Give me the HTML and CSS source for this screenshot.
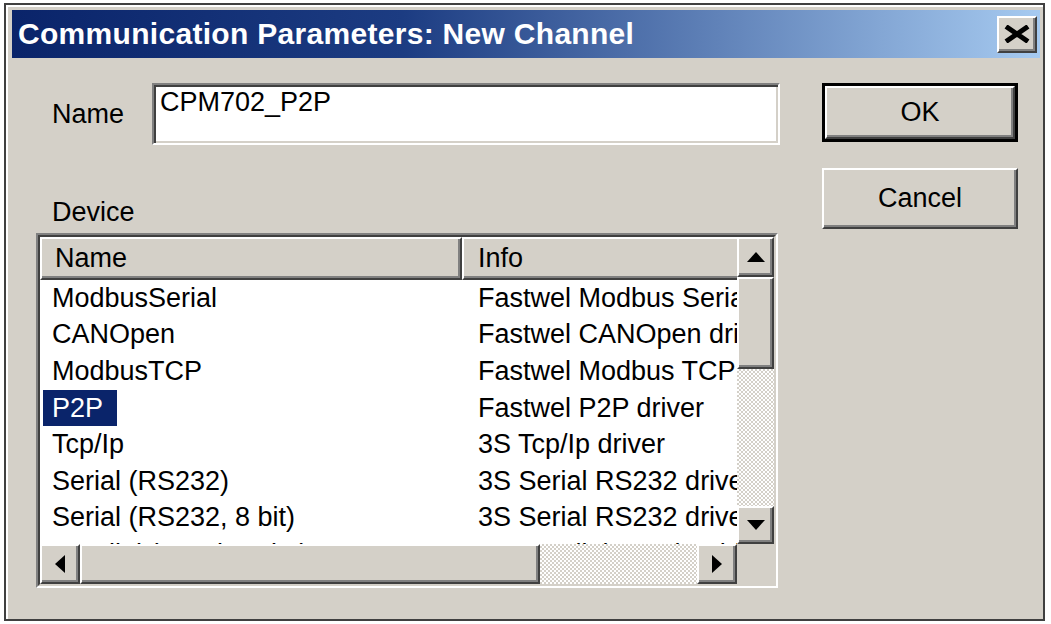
FILE: index.html
```html
<!DOCTYPE html>
<html lang="en">
  <head>
    <meta charset="UTF-8" />
    <title>Communication Parameters: New Channel</title>
    <link rel="stylesheet" href="styles.css">
  </head>
  <body>
    <div class="window">
      <div class="titlebar">
        <span class="title">Communication Parameters: New Channel</span>
        <div class="close-btn">
          <svg width="28" height="18" viewBox="0 0 28 18">
            <path d="M3 1.5 L25 16.5 M25 1.5 L3 16.5" stroke="#000" stroke-width="5" fill="none" />
          </svg>
        </div>
      </div>

      <div class="dialog-body">
        <div class="main">
          <div class="name-row">
            <label>Name</label>
            <div class="textbox">CPM702_P2P</div>
          </div>

          <div class="device-label">Device</div>

          <div class="listview">
            <div class="listview-inner">
              <div class="list-main">
                <div class="header">
                  <div class="header-cell col-name">Name</div>
                  <div class="header-cell col-info">Info</div>
                </div>
                <div class="row"><div class="name"><span>ModbusSerial</span></div><div class="info">Fastwel Modbus Serial driver</div></div>
                <div class="row"><div class="name"><span>CANOpen</span></div><div class="info">Fastwel CANOpen driver</div></div>
                <div class="row"><div class="name"><span>ModbusTCP</span></div><div class="info">Fastwel Modbus TCP driver</div></div>
                <div class="row selected"><div class="name"><span>P2P</span></div><div class="info">Fastwel P2P driver</div></div>
                <div class="row"><div class="name"><span>Tcp/Ip</span></div><div class="info">3S Tcp/Ip driver</div></div>
                <div class="row"><div class="name"><span>Serial (RS232)</span></div><div class="info">3S Serial RS232 driver</div></div>
                <div class="row"><div class="name"><span>Serial (RS232, 8 bit)</span></div><div class="info">3S Serial RS232 driver (8 bit)</div></div>
                <div class="row"><div class="name"><span>Parallel (Level 2 Sim)</span></div><div class="info">3S Parallel Level 2 driver</div></div>
              </div>

              <div class="vscroll">
                <div class="sb-btn sb-up">
                  <svg width="18" height="10" viewBox="0 0 18 10"><polygon points="0,10 9,0 18,10" /></svg>
                </div>
                <div class="sb-thumb v-thumb"></div>
                <div class="sb-track"></div>
                <div class="sb-btn sb-down">
                  <svg width="18" height="10" viewBox="0 0 18 10"><polygon points="0,0 18,0 9,10" /></svg>
                </div>
              </div>

              <div class="hscroll">
                <div class="sb-btn sb-left">
                  <svg width="10" height="18" viewBox="0 0 10 18"><polygon points="10,0 10,18 0,9" /></svg>
                </div>
                <div class="sb-thumb h-thumb"></div>
                <div class="sb-track"></div>
                <div class="sb-btn sb-right">
                  <svg width="10" height="18" viewBox="0 0 10 18"><polygon points="0,0 10,9 0,18" /></svg>
                </div>
              </div>

              <div class="corner"></div>
            </div>
          </div>
        </div>

        <div class="buttons">
          <div class="btn default"><div class="btn-face">OK</div></div>
          <div class="btn"><div class="btn-face">Cancel</div></div>
        </div>
      </div>
    </div>
  </body>
</html>
```

FILE: styles.css
```css
body {
  margin: 0;
  padding: 3px 6px 3px 4px;
  background-color: #ffffff;
  font-family: "Liberation Sans", Arial, sans-serif;
  font-size: 27px;
  color: #000000;
}
.window {
  width: 1041px;
  height: 618px;
  box-sizing: border-box;
  border: 2px solid #404040;
  box-shadow: inset 2px 2px #ffffff;
  background-color: #d4d0c8;
  padding: 5px 3px 3px 6px;
  display: flex;
  flex-direction: column;
}
.titlebar {
  height: 48px;
  flex: none;
  background: linear-gradient(to right, #0a246a, #1c3c82 38%, #a6caf0);
  display: flex;
  align-items: center;
  justify-content: space-between;
  padding: 0 3px 0 6px;
}
.title {
  color: #ffffff;
  font-weight: bold;
  font-size: 30px;
  letter-spacing: 0.3px;
  white-space: nowrap;
}
.close-btn {
  width: 40px;
  height: 37px;
  box-sizing: border-box;
  background-color: #d4d0c8;
  border: 2px solid;
  border-color: #ffffff #404040 #404040 #ffffff;
  box-shadow: inset -2px -2px #808080;
  display: flex;
  align-items: center;
  justify-content: center;
}
.dialog-body {
  display: flex;
  gap: 42px;
  padding: 25px 22px 0 24px;
}
.main {
  width: 744px;
}
.name-row {
  display: flex;
  align-items: center;
  height: 62px;
}
.name-row label {
  width: 100px;
  padding-left: 16px;
}
.textbox {
  width: 628px;
  height: 62px;
  box-sizing: border-box;
  background-color: #ffffff;
  border: 2px solid;
  border-color: #808080 #ffffff #ffffff #808080;
  box-shadow: inset 2px 2px #404040, inset -2px -2px #d4d0c8;
  padding: 2px 6px;
  line-height: 31px;
}
.device-label {
  margin-top: 52px;
  padding-left: 16px;
  line-height: 31px;
}
.listview {
  margin-top: 5px;
  width: 742px;
  height: 355px;
  box-sizing: border-box;
  border: 2px solid;
  border-color: #808080 #ffffff #ffffff #808080;
}
.listview-inner {
  height: 100%;
  box-sizing: border-box;
  border: 2px solid;
  border-color: #404040 #d4d0c8 #d4d0c8 #404040;
  background-color: #ffffff;
  display: grid;
  grid-template-columns: 1fr 37px;
  grid-template-rows: 1fr 40px;
}
.list-main {
  overflow: hidden;
  min-width: 0;
}
.header {
  display: flex;
  height: 43px;
}
.header-cell {
  flex: none;
  box-sizing: border-box;
  height: 43px;
  background-color: #d4d0c8;
  border: 2px solid;
  border-color: #ffffff #404040 #404040 #ffffff;
  box-shadow: inset -2px -2px #808080;
  display: flex;
  align-items: center;
}
.col-name {
  width: 422px;
  padding-left: 13px;
}
.col-info {
  width: 320px;
  padding-left: 14px;
}
.row {
  display: flex;
  height: 36.6px;
  white-space: nowrap;
}
.row .name {
  flex: none;
  width: 422px;
  box-sizing: border-box;
  padding-left: 3px;
  display: flex;
}
.row .name span {
  padding: 0 14px 0 9px;
  display: flex;
  align-items: center;
}
.row.selected .name span {
  background-color: #0a246a;
  color: #ffffff;
}
.row .info {
  padding-left: 16px;
  display: flex;
  align-items: center;
}
.vscroll {
  display: flex;
  flex-direction: column;
}
.hscroll {
  display: flex;
}
.sb-btn,
.sb-thumb {
  flex: none;
  box-sizing: border-box;
  background-color: #d4d0c8;
  border: 2px solid;
  border-color: #ffffff #404040 #404040 #ffffff;
  box-shadow: inset -2px -2px #808080;
  display: flex;
  align-items: center;
  justify-content: center;
}
.sb-up {
  height: 40px;
}
.sb-down {
  height: 38px;
}
.v-thumb {
  height: 92px;
}
.sb-left,
.sb-right {
  width: 40px;
}
.h-thumb {
  width: 460px;
}
.sb-track {
  flex: 1;
  background: repeating-conic-gradient(#d4d0c8 0% 25%, #ffffff 0% 50%) 0 0 / 4px 4px;
}
.corner {
  background-color: #d4d0c8;
}
.buttons {
  display: flex;
  flex-direction: column;
  gap: 26px;
  width: 196px;
}
.btn {
  height: 61px;
  box-sizing: border-box;
  display: flex;
}
.btn-face {
  flex: 1;
  box-sizing: border-box;
  border: 2px solid;
  border-color: #ffffff #404040 #404040 #ffffff;
  box-shadow: inset -2px -2px #808080;
  display: flex;
  align-items: center;
  justify-content: center;
}
.btn.default {
  height: 59px;
  border: 3px solid #000000;
}
```
